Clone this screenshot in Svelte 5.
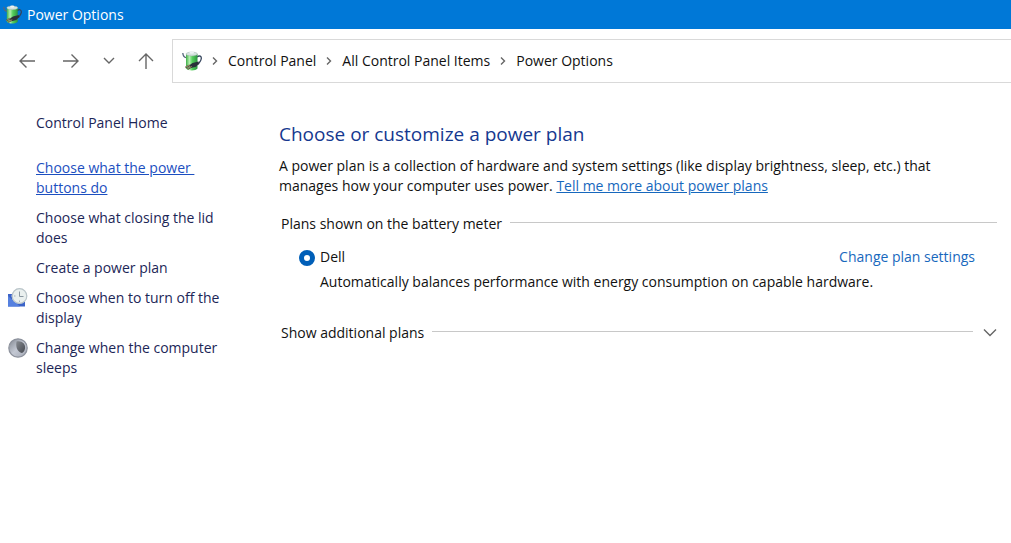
<script lang="ts">
    const crumbs = ['Control Panel', 'All Control Panel Items', 'Power Options'];

    const tasks = [
        { text: 'Choose what the power buttons do', icon: '', active: true },
        { text: 'Choose what closing the lid does', icon: '' },
        { text: 'Create a power plan', icon: '' },
        { text: 'Choose when to turn off the display', icon: 'clock' },
        { text: 'Change when the computer sleeps', icon: 'moon' }
    ];

    let plan = $state('dell');
</script>

{#snippet battery(size: number)}
    <svg class="battery" width={size} height={size} viewBox="0 0 20 20" aria-hidden="true">
        <defs>
            <linearGradient id="cell{size}">
                <stop offset="0" stop-color="#3fae48" />
                <stop offset="0.3" stop-color="#b4f0ae" />
                <stop offset="0.55" stop-color="#55cf5c" />
                <stop offset="1" stop-color="#2c9440" />
            </linearGradient>
        </defs>
        <path d="M0.8 2c.2 3 1.2 4.300 3.500 4.700" fill="none" stroke="#56677c" stroke-width="1.300" />
        <path d="M15 6c2.500-2 4.800-.8 4.200 2-.4 2.200-1.800 3.300-3 5.500" fill="none" stroke="#34445c" stroke-width="1.300" />
        <path d="M4 3v14.500c1.500 2.500 10 2.500 11.500 0V3z" fill="url(#cell{size})" />
        <ellipse cx="9.750" cy="3" rx="5.750" ry="1.900" fill="#d5e2de" stroke="#9cb0a8" stroke-width=".5" />
        <ellipse cx="9.750" cy="1.700" rx="2.300" ry="1.100" fill="#eef3f4" />
        <path d="M7 14.500l3.500-2.500 6-1.500.5 2-3 3.200-5 1.300z" fill="#293039" />
        <path d="M3.500 16.500l4.200-2.300M5.500 18l4.200-2.300" stroke="#3b3d38" stroke-width="1.600" />
        <path d="M3.500 16.300l4.200-2.300M5.500 17.800l4.200-2.300" stroke="#c3a873" stroke-width=".8" />
    </svg>
{/snippet}

<div class="window">
    <header class="titlebar">
        {@render battery(19)}
        <span>Power Options</span>
    </header>

    <div class="toolbar">
        <nav class="history" aria-label="History">
            <button aria-label="Back">
                <svg width="18" height="18" viewBox="0 0 18 18"><path d="M17 9H2M8.500 2.500L2 9l6.500 6.500" /></svg>
            </button>
            <button aria-label="Forward">
                <svg width="18" height="18" viewBox="0 0 18 18"><path d="M1 9h15M9.500 2.500L16 9l-6.500 6.500" /></svg>
            </button>
            <button class="recent" aria-label="Recent locations">
                <svg width="12" height="12" viewBox="0 0 12 12"><path d="M1 3l5 5 5-5" /></svg>
            </button>
            <button aria-label="Up">
                <svg width="18" height="18" viewBox="0 0 18 18"><path d="M9 17V2M2 9l7-7 7 7" /></svg>
            </button>
        </nav>
        <nav class="address" aria-label="Address">
            {@render battery(20)}
            {#each crumbs as crumb}
                <svg class="sep" width="6" height="10" viewBox="0 0 6 10"><path d="M1 1.500L4.500 5 1 8.500" /></svg>
                <a href="#top">{crumb}</a>
            {/each}
        </nav>
    </div>

    <div class="body">
        <aside>
            <a class="home" href="#home">Control Panel Home</a>
            <ul>
                {#each tasks as task}
                    <li>
                        <span class="icon">
                            {#if task.icon === 'clock'}
                                <svg width="20" height="20" viewBox="0 0 20 20" aria-hidden="true">
                                    <path d="M0 6h17v12.500H0z" fill="#3c64c8" />
                                    <path d="M0 18.500L0 8l12 10.500z" fill="#5580df" />
                                    <circle cx="11.500" cy="8" r="7.800" fill="#eaf0ef" />
                                    <circle cx="11.500" cy="8" r="7.300" fill="none" stroke="#b9c4c9" stroke-width="1.200" />
                                    <path d="M11.500 3.500v5h4" fill="none" stroke="#8996a0" />
                                    <path d="M11.500 12.500V14M6 8h1.500" stroke="#a5b2ba" />
                                </svg>
                            {:else if task.icon === 'moon'}
                                <svg width="20" height="20" viewBox="0 0 20 20" aria-hidden="true">
                                    <defs>
                                        <linearGradient id="moon" x2="1" y2="1">
                                            <stop offset="0" stop-color="#80868f" />
                                            <stop offset="0.5" stop-color="#c3c8d3" />
                                            <stop offset="1" stop-color="#a4a9b5" />
                                        </linearGradient>
                                        <linearGradient id="shade" x2="1" y2="1">
                                            <stop offset="0" stop-color="#85898f" />
                                            <stop offset="1" stop-color="#454950" />
                                        </linearGradient>
                                    </defs>
                                    <circle cx="10" cy="10" r="9.200" fill="url(#moon)" stroke="#8d929d" stroke-width="1.200" />
                                    <path d="M8.500 3.500c5.500-1 9.300 2.500 8.500 7-.4 2.500-1.700 4-3.200 4.500-3.500-1-6.500-4.500-5.300-11.500z" fill="url(#shade)" />
                                </svg>
                            {/if}
                        </span>
                        <a href="#task" class:active={task.active}>{task.text}</a>
                    </li>
                {/each}
            </ul>
        </aside>

        <main>
            <h1>Choose or customize a power plan</h1>
            <p class="intro">
                A power plan is a collection of hardware and system settings (like display brightness, sleep, etc.) that
                manages how your computer uses power. <a href="#more">Tell me more about power plans</a>
            </p>

            <section>
                <h2>Plans shown on the battery meter</h2>
                <div class="plan">
                    <input type="radio" id="dell" name="plan" value="dell" bind:group={plan} />
                    <label for="dell">Dell</label>
                    <a href="#settings">Change plan settings</a>
                </div>
                <p class="description">Automatically balances performance with energy consumption on capable hardware.</p>
            </section>

            <button class="more">
                <span>Show additional plans</span>
                <svg width="14" height="14" viewBox="0 0 14 14"><path d="M1 3.500l6 6 6-6" /></svg>
            </button>
        </main>
    </div>
</div>

<style>
    :global(body) {
        margin: 0;
        background: #fff;
    }
    .window {
        font: 14px/20px 'Open Sans', 'Noto Sans', sans-serif;
        color: #111;
    }
    a {
        color: inherit;
        text-decoration: none;
    }
    button {
        padding: 0;
        border: none;
        background: none;
        font: inherit;
        color: inherit;
    }
    svg {
        flex: none;
        display: block;
    }
    button path,
    .sep path {
        fill: none;
        stroke: #666;
        stroke-width: 1.4;
    }
    .titlebar {
        display: flex;
        align-items: center;
        gap: 5px;
        height: 29px;
        padding-left: 3px;
        background: #0078d7;
        color: #fff;
    }
    .toolbar {
        display: flex;
        padding-top: 10px;
    }
    .history {
        display: flex;
        align-items: center;
        gap: 26px;
        padding: 0 17px 0 18px;
    }
    .history .recent {
        margin: 0 -4px 0 -3px;
    }
    .address {
        flex: 1;
        display: flex;
        align-items: center;
        gap: 10px;
        height: 42px;
        padding-left: 9px;
        border: 1px solid #d9d9d9;
        border-right: none;
    }
    .body {
        display: flex;
    }
    aside {
        flex: none;
        width: 232px;
        padding: 30px 0 0 8px;
        color: #1c2657;
    }
    .home {
        margin-left: 28px;
    }
    ul {
        display: grid;
        gap: 10px;
        margin: 25px 0 0;
        padding: 0;
        list-style: none;
    }
    li {
        display: flex;
        gap: 8px;
    }
    .icon {
        flex: none;
        width: 20px;
    }
    li a {
        max-width: 190px;
        white-space: break-spaces;
    }
    .active {
        color: #1c4fc0;
        text-decoration: underline;
    }
    main {
        flex: 1;
        padding: 37px 14px 0 39px;
    }
    h1 {
        margin: 0;
        font-size: 19px;
        font-weight: 400;
        line-height: 28px;
        color: #15388f;
    }
    p {
        margin: 0;
    }
    .intro {
        max-width: 690px;
        margin-top: 8px;
    }
    .intro a,
    .plan a {
        color: #1768bd;
    }
    .intro a {
        text-decoration: underline;
    }
    section {
        margin-top: 18px;
    }
    h2 {
        display: flex;
        align-items: center;
        gap: 8px;
        margin: 0;
        padding-left: 2px;
        font-size: 14px;
        font-weight: 400;
    }
    h2::after,
    .more span::after {
        content: '';
        flex: 1;
        height: 1px;
        margin-bottom: 3px;
        background: #c8c8c8;
    }
    .plan {
        display: flex;
        align-items: center;
        gap: 5px;
        margin-top: 13px;
        padding: 0 22px 0 20px;
    }
    .plan a {
        margin-left: auto;
    }
    input {
        appearance: none;
        width: 16px;
        height: 16px;
        margin: 2px 0 0;
        border: 1px solid #868686;
        border-radius: 50%;
    }
    input:checked {
        border: 5px solid #005fb8;
    }
    .description {
        margin-top: 5px;
        padding-left: 41px;
    }
    .more {
        display: flex;
        align-items: center;
        gap: 10px;
        width: 100%;
        margin-top: 31px;
        padding-left: 2px;
    }
    .more span {
        flex: 1;
        display: flex;
        align-items: center;
        gap: 8px;
    }
</style>
